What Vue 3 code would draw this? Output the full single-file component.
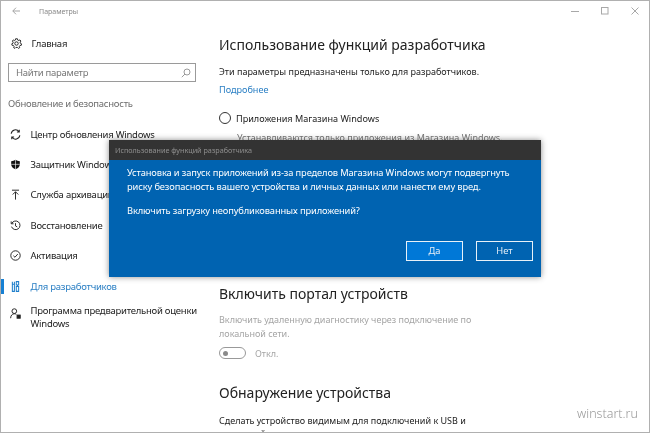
<script setup>
const navItems = [
  { id: 'update', label: 'Центр обновления Windows' },
  { id: 'shield', label: 'Защитник Windows' },
  { id: 'backup', label: 'Служба архивации' },
  { id: 'restore', label: 'Восстановление' },
  { id: 'activate', label: 'Активация' },
  { id: 'dev', label: 'Для разработчиков', active: true },
  { id: 'insider', label: 'Программа предварительной оценки Windows', tall: true }
]
</script>

<template>
  <div class="window">
    <header class="titlebar">
      <svg class="back" width="8" height="8" viewBox="0 0 8 8" fill="none" stroke="#a5a5a5" stroke-width="1"><path d="M8 4H.8M4 .7L.8 4 4 7.300" /></svg>
      <span class="app-title">Параметры</span>
      <div class="controls">
        <svg width="8" height="8" viewBox="0 0 8 8" stroke="#a8a8a8" fill="none"><path d="M0 4.500h8" /></svg>
        <svg width="8" height="8" viewBox="0 0 8 8" stroke="#a8a8a8" fill="none"><rect x=".5" y=".5" width="6.500" height="6.500" /></svg>
        <svg width="8" height="8" viewBox="0 0 8 8" stroke="#a8a8a8" fill="none"><path d="M.5.500l7 7M7.500.500l-7 7" /></svg>
      </div>
    </header>

    <div class="columns">
      <aside class="sidebar">
        <div class="home">
          <svg class="icon" width="11" height="11" viewBox="0 0 14 14" fill="none" stroke="#222" stroke-width="1.200">
            <circle cx="7" cy="7" r="2.200" />
            <path d="M5.800 1h2.400l.4 1.700 1.300.6 1.500-.9 1.200 1.500-1 1.400.3 1.400 1.500.7-.3 1.900-1.700.2-.8 1.200.5 1.600-1.700.9-1.200-1.200H6.300l-1.200 1.200-1.700-.9.5-1.600-.8-1.200-1.700-.2L1 7.400l1.500-.7.3-1.400-1-1.400L3 2.400l1.500.9 1-.6z" />
          </svg>
          <span>Главная</span>
        </div>
        <div class="search">
          <span>Найти параметр</span>
          <svg width="10" height="10" viewBox="0 0 10 10" fill="none" stroke="#9a9a9a"><circle cx="6" cy="4" r="3" /><path d="M4 6L.8 9.200" /></svg>
        </div>
        <div class="group">Обновление и безопасность</div>
        <nav class="nav">
          <div v-for="item in navItems" :key="item.id" class="nav-item" :class="{ active: item.active, tall: item.tall }">
            <span class="slot">
              <svg v-if="item.id === 'update'" width="11" height="11" viewBox="0 0 14 14" fill="none" stroke="#222" stroke-width="1.300"><path d="M1.500 6a5.500 5.500 0 0 1 10-2.500M12.500 8a5.500 5.500 0 0 1-10 2.500M11.800 .8v3h-3M2.200 13.200v-3h3" /></svg>
              <svg v-else-if="item.id === 'shield'" width="11" height="11" viewBox="0 0 14 14"><path d="M7 1c1.500 1 3.500 1.700 5.500 1.800V7c0 3-2.500 5-5.500 6.200C4 12 1.500 10 1.500 7V2.800C3.500 2.700 5.500 2 7 1z" fill="#111" /><path d="M7 1v12M1.500 6.800h11" stroke="#fff" stroke-width=".8" /></svg>
              <svg v-else-if="item.id === 'backup'" width="11" height="11" viewBox="0 0 14 14" fill="none" stroke="#222" stroke-width="1.200"><path d="M2.500 1.500h9M7 13.500V3.500M3.500 7L7 3.500 10.500 7" /></svg>
              <svg v-else-if="item.id === 'restore'" width="11" height="11" viewBox="0 0 14 14" fill="none" stroke="#222" stroke-width="1.200"><path d="M2.200 4.500A5.500 5.500 0 1 1 2 8.500M1.500 1.800v3h3M7 4v3.500l2.200 1.300" /></svg>
              <svg v-else-if="item.id === 'activate'" width="11" height="11" viewBox="0 0 14 14" fill="none" stroke="#222" stroke-width="1.200"><circle cx="7" cy="7" r="6" /><path d="M4.300 7.300l2 1.900 3.600-4" /></svg>
              <svg v-else-if="item.id === 'dev'" width="11" height="11" viewBox="0 0 14 14" fill="none" stroke="#1f7fcb" stroke-width="1.300"><path d="M3 .8v3.400h2.600V.8M3 4.200v9h2.600v-9M8 .8h3v4.400H8zM9.500 5.200v1.800M8 7h3v6.200H8z" /></svg>
              <svg v-else width="11" height="11" viewBox="0 0 14 14" fill="none" stroke="#222" stroke-width="1.200"><circle cx="5.500" cy="4" r="3" /><path d="M.8 13c0-3.300 2-5.700 4.700-5.700 1 0 1.800.3 2.500.8" /><rect x="9" y="9" width="4" height="4" fill="#222" /></svg>
            </span>
            <span class="nav-label">{{ item.label }}</span>
          </div>
        </nav>
      </aside>

      <main class="content">
        <h1>Использование функций разработчика</h1>
        <p class="note">Эти параметры предназначены только для разработчиков.</p>
        <a class="link">Подробнее</a>
        <div class="radio"><i></i><span>Приложения Магазина Windows</span></div>
        <p class="radio-desc">Устанавливаются только приложения из Магазина Windows.</p>
        <div class="covered"></div>
        <h2>Включить портал устройств</h2>
        <p class="muted">Включить удаленную диагностику через подключение по локальной сети.</p>
        <div class="toggle"><span class="track"><b></b></span><span>Откл.</span></div>
        <h2 class="second">Обнаружение устройства</h2>
        <p class="note wrap">Сделать устройство видимым для подключений к USB и локальной сети</p>
      </main>
    </div>

    <section class="dialog">
      <div class="dialog-title">Использование функций разработчика</div>
      <div class="dialog-body">
        <p>Установка и запуск приложений из-за пределов Магазина Windows могут подвергнуть риску безопасность вашего устройства и личных данных или нанести ему вред.</p>
        <p>Включить загрузку неопубликованных приложений?</p>
        <div class="buttons">
          <button class="primary">Да</button>
          <button>Нет</button>
        </div>
      </div>
    </section>

    <div class="watermark">winstart.ru</div>
  </div>
</template>

<style scoped>
.window {
  position: relative;
  width: 650px;
  height: 433px;
  box-sizing: border-box;
  overflow: hidden;
  background: #fff;
  border: 1px solid #b0b0b0;
  font-family: "Noto Sans", "Open Sans", sans-serif;
  color: #222;
  filter: blur(0.35px);
}
.titlebar {
  display: flex;
  align-items: center;
  height: 20px;
  padding-left: 11px;
}
.back { margin-right: 19px; }
.app-title { font-size: 7px; color: #888; }
.controls {
  margin-left: auto;
  display: flex;
  gap: 22px;
  padding-right: 10px;
}
.columns {
  display: grid;
  grid-template-columns: 217px 1fr;
}
.sidebar {
  padding-top: 14px;
  font-size: 9.500px;
  letter-spacing: -0.25px;
}
.home {
  display: flex;
  align-items: center;
  gap: 9.500px;
  height: 16px;
  padding-left: 10px;
}
.search {
  margin: 12px 0 0 7px;
  width: 188px;
  height: 19px;
  box-sizing: border-box;
  border: 1.500px solid #9a9a9a;
  display: flex;
  align-items: center;
  justify-content: space-between;
  padding: 0 4px 0 7px;
  color: #777;
}
.group {
  margin: 14px 0 0 7px;
  line-height: 16px;
  color: #6e6e6e;
}
.nav { margin-top: 7px; }
.nav-item {
  display: flex;
  align-items: center;
  height: 30.400px;
  padding-left: 7px;
  border-left: 3px solid transparent;
  margin-left: -1px;
}
.nav-item.active {
  color: #2a7fc4;
}
.nav-item.active::before {
  content: "";
  position: absolute;
  left: 0;
  width: 3px;
  height: 15px;
  background: #1780d3;
}
.nav-item.tall {
  height: 30px;
  align-items: flex-start;
}
.tall .slot { padding-top: 7px; }
.tall .nav-label { padding-top: 4px; width: 176px; line-height: 12.500px; }
.slot {
  width: 20.500px;
  flex: none;
  display: flex;
  color: inherit;
}
.content { padding-left: 1px; }
h1 {
  margin: 11px 0 0;
  font-size: 14px;
  font-weight: 400;
  line-height: 26px;
  color: #222;
}
h2 {
  margin: 0;
  font-size: 14px;
  font-weight: 400;
  line-height: 22px;
  color: #222;
}
p { margin: 0; }
.note {
  margin-top: 7px;
  font-size: 9px;
  line-height: 13px;
}
.wrap { width: 256px; margin-top: 10px; line-height: 13px; }
.link {
  display: block;
  margin-top: 5px;
  font-size: 9.100px;
  line-height: 13px;
  color: #2a7fc4;
}
.radio {
  display: flex;
  align-items: center;
  gap: 5px;
  margin-top: 14px;
  height: 16px;
  font-size: 9.100px;
}
.radio i {
  width: 10px;
  height: 10px;
  border: 1.500px solid #333;
  border-radius: 50%;
}
.radio-desc {
  margin: 5px 0 0 18px;
  font-size: 9px;
  line-height: 13px;
  color: #777;
}
.covered { height: 139px; }
.muted {
  margin-top: 8px;
  width: 270px;
  font-size: 9px;
  line-height: 14px;
  color: #a5a5a5;
}
.toggle {
  display: flex;
  align-items: center;
  gap: 9px;
  margin-top: 5px;
  height: 14px;
  font-size: 9px;
  color: #a5a5a5;
}
.track {
  display: flex;
  align-items: center;
  width: 27px;
  height: 12px;
  box-sizing: border-box;
  border: 1px solid #999;
  border-radius: 6px;
  padding-left: 3px;
}
.track b {
  width: 5px;
  height: 5px;
  border-radius: 50%;
  background: #8a8a8a;
}
.second { margin-top: 22px; }
.dialog {
  position: absolute;
  left: 108px;
  top: 139px;
  width: 432px;
  height: 137px;
  display: flex;
  flex-direction: column;
  box-shadow: 0 0 6px rgba(0, 0, 0, 0.45);
}
.dialog-title {
  height: 20px;
  background: #333;
  color: #8f8f8f;
  font-size: 7.200px;
  line-height: 20px;
  padding-left: 6px;
}
.dialog-body {
  flex: 1;
  background: #0063b1;
  color: #fff;
  padding: 5.500px 8px 16px 18px;
  display: flex;
  flex-direction: column;
  font-size: 9.300px;
  letter-spacing: -0.12px;
  line-height: 14.500px;
}
.dialog-body p + p { margin-top: 9px; }
.buttons {
  margin-top: auto;
  display: flex;
  justify-content: flex-end;
  gap: 13px;
}
.buttons button {
  width: 57px;
  height: 20px;
  box-sizing: border-box;
  background: transparent;
  border: 1px solid #e8f1f8;
  color: #e5eef6;
  font: inherit;
  padding: 0;
}
.buttons .primary { background: #0078d7; }
.watermark {
  position: absolute;
  right: 11px;
  bottom: 10px;
  font-size: 12.500px;
  font-weight: 300;
  color: #999;
}
</style>
